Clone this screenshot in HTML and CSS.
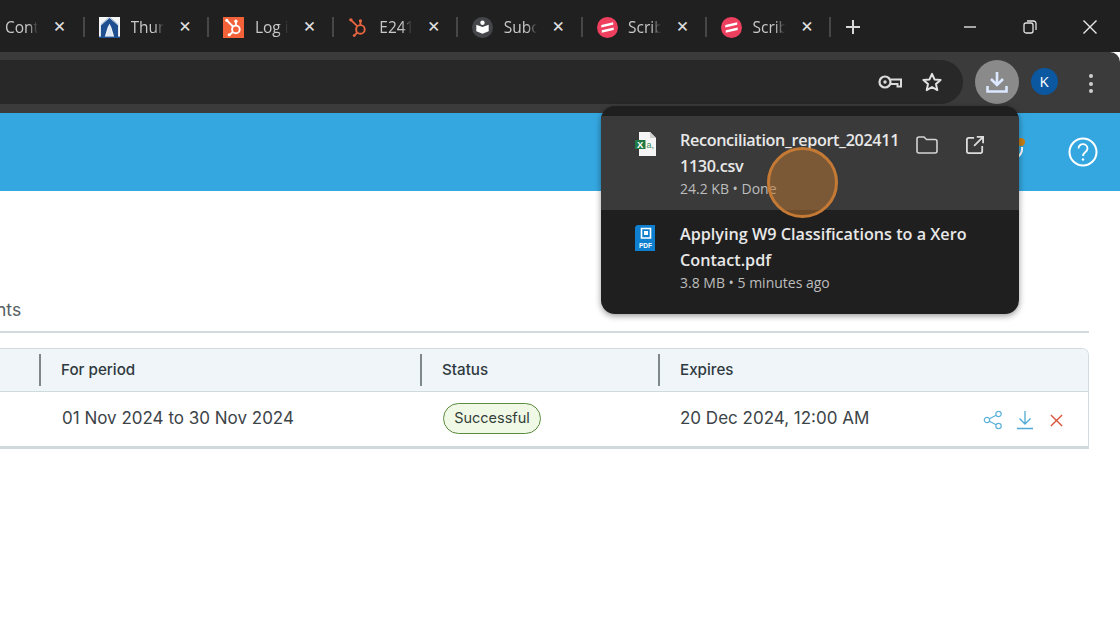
FILE: index.html
```html
<!DOCTYPE html>
<html lang="en">
<head>
<meta charset="utf-8">
<title>Downloads</title>
<link rel="stylesheet" href="styles.css">
</head>
<body>
<div class="tabstrip">
  <div class="tab tab-first"><span class="tab-label">Cont</span><span class="tab-close">✕</span></div>
  <div class="tab">
    <svg class="tab-icon" viewBox="0 0 22 22"><rect width="22" height="22" fill="#f4f6f8"/><path d="M11 1 20 9V21H16L13 11 11 7 9 11 6 21H2V9Z" fill="#1d4f91"/><path d="M11 8.500 14.500 20H7.500Z" fill="#dce8f4"/><path d="M2 8 11 0 20 8" fill="none" stroke="#9fb4c8" stroke-width="1"/><rect y="20.500" width="22" height="1.500" fill="#1d4f91"/></svg>
    <span class="tab-label">Thun</span><span class="tab-close">✕</span>
  </div>
  <div class="tab">
    <svg class="tab-icon" viewBox="0 0 22 22"><rect width="22" height="22" fill="#f4623a"/><g fill="none" stroke="#fff" stroke-width="2"><circle cx="13.500" cy="13" r="4"/><path d="M13.500 9V5M4.500 4l6 6M10 16l-3 2.500"/></g><circle cx="13.500" cy="4.500" r="1.800" fill="#fff"/><circle cx="4" cy="3.500" r="1.700" fill="#fff"/><circle cx="6.500" cy="18.500" r="1.600" fill="#fff"/></svg>
    <span class="tab-label">Log i</span><span class="tab-close">✕</span>
  </div>
  <div class="tab">
    <svg class="tab-icon" viewBox="0 0 22 22"><g fill="none" stroke="#e8663f" stroke-width="2"><circle cx="13" cy="13" r="4.500"/><path d="M13 8.500V4.500M3.500 3.500l6.200 6M9.500 16.500l-2.500 2.500"/></g><circle cx="13" cy="4" r="1.700" fill="#e8663f"/><circle cx="3" cy="3" r="1.800" fill="#e8663f"/><circle cx="6.500" cy="19.500" r="1.500" fill="#e8663f"/></svg>
    <span class="tab-label">E241</span><span class="tab-close">✕</span>
  </div>
  <div class="tab">
    <svg class="tab-icon" viewBox="0 0 22 22"><circle cx="11" cy="11" r="11" fill="#44464a"/><circle cx="11" cy="6" r="2.300" fill="#fff"/><path d="M4.500 8 11 10.500 17.500 8V15L11 17.500 4.500 15Z" fill="#fff"/></svg>
    <span class="tab-label">Subc</span><span class="tab-close">✕</span>
  </div>
  <div class="tab">
    <svg class="tab-icon" viewBox="0 0 22 22"><circle cx="11" cy="11" r="11" fill="#ef3f5f"/><path d="M4.500 8.500 17 5.500V8L4.500 11ZM5 14 17.500 11V13.500L5 16.500Z" fill="#fff"/></svg>
    <span class="tab-label">Scrib</span><span class="tab-close">✕</span>
  </div>
  <div class="tab">
    <svg class="tab-icon" viewBox="0 0 22 22"><circle cx="11" cy="11" r="11" fill="#ef3f5f"/><path d="M4.500 8.500 17 5.500V8L4.500 11ZM5 14 17.500 11V13.500L5 16.500Z" fill="#fff"/></svg>
    <span class="tab-label">Scrib</span><span class="tab-close">✕</span>
  </div>
  <svg class="new-tab" viewBox="0 0 14 14"><path d="M7 0V14M0 7H14" stroke="#d8d8d8" stroke-width="2"/></svg>
  <div class="window-controls">
    <svg class="win-btn" viewBox="0 0 14 14"><path d="M1 7H13" stroke="#e2e2e2" stroke-width="1.400"/></svg>
    <svg class="win-btn" viewBox="0 0 14 14"><rect x="1" y="3" width="9" height="10" rx="2" fill="none" stroke="#e2e2e2" stroke-width="1.300"/><path d="M4 1H10.500A2.500 2.500 0 0 1 13 3.500V10" fill="none" stroke="#e2e2e2" stroke-width="1.300"/></svg>
    <svg class="win-btn" viewBox="0 0 14 14"><path d="M0.500 0.500 13.500 13.500M13.500 0.500 0.500 13.500" stroke="#e8e8e8" stroke-width="1.400"/></svg>
  </div>
</div>

<div class="toolbar">
  <div class="omnibox">
    <svg class="omni-key" viewBox="0 0 24 16"><circle cx="7" cy="8" r="5.500" fill="none" stroke="#dcdcdc" stroke-width="2.200"/><circle cx="7" cy="8" r="1.700" fill="#dcdcdc"/><path d="M12.500 5.500H23V12.500H19.500V10H13" fill="none" stroke="#dcdcdc" stroke-width="2"/></svg>
    <svg class="omni-star" viewBox="0 0 20 20"><path d="M10 1.800 12.500 7.400 18.600 8 14 12.100 15.300 18.100 10 15 4.700 18.100 6 12.100 1.400 8 7.500 7.400Z" fill="none" stroke="#e2e2e2" stroke-width="2" stroke-linejoin="round"/></svg>
  </div>
  <div class="dl-button">
    <svg class="dl-icon" viewBox="0 0 22 22"><path d="M11 1V13.500M5 8 11 14 17 8M1.500 15V20.500H20.500V15" fill="none" stroke="#dbe8ff" stroke-width="2.600"/></svg>
  </div>
  <div class="avatar">K</div>
  <div class="kebab"><i></i><i></i><i></i></div>
</div>

<header class="app-bar">
  <svg class="bell-piece" viewBox="0 0 20 28"><circle cx="10" cy="7" r="4" fill="#c77f14"/><path d="M11 12C11.500 17 9 21 5 23" fill="none" stroke="#fff" stroke-width="2"/></svg>
  <svg class="help" viewBox="0 0 30 30"><circle cx="15" cy="15" r="13.500" fill="none" stroke="#fff" stroke-width="2"/><path d="M10.500 11.500C10.500 5.500 19.500 6 19.500 11.500 19.500 15 15 15 15 19" fill="none" stroke="#fff" stroke-width="1.800"/><circle cx="15" cy="22.500" r="1.200" fill="#fff"/></svg>
</header>

<main class="content">
  <div class="section-title">nts</div>
  <div class="data-table">
    <div class="table-head">
      <div class="cell cell-lead"></div>
      <div class="cell cell-period"><span>For period</span></div>
      <div class="cell cell-status"><span>Status</span></div>
      <div class="cell cell-expires"><span>Expires</span></div>
    </div>
    <div class="table-row">
      <div class="cell cell-lead"></div>
      <div class="cell cell-period">01 Nov 2024 to 30 Nov 2024</div>
      <div class="cell cell-status"><span class="badge">Successful</span></div>
      <div class="cell cell-expires">
        <span>20 Dec 2024, 12:00 AM</span>
        <div class="actions">
          <svg class="act" viewBox="0 0 20 20"><g fill="none" stroke="#5cb2d8" stroke-width="1.200"><circle cx="4" cy="10" r="2.700"/><circle cx="15.500" cy="4" r="2.700"/><circle cx="15.500" cy="16" r="2.700"/><path d="M6.400 8.700 13.100 5.300M6.400 11.300 13.100 14.700"/></g></svg>
          <svg class="act" viewBox="0 0 20 20"><path d="M10 1V14M4.500 8.500 10 14 15.500 8.500M2 18.500H18" fill="none" stroke="#4fa9d6" stroke-width="1.300"/></svg>
          <svg class="act act-x" viewBox="0 0 14 14"><path d="M1 1 13 13M13 1 1 13" stroke="#d9553b" stroke-width="1.500"/></svg>
        </div>
      </div>
    </div>
  </div>
</main>

<aside class="dl-popup">
  <div class="dl-item dl-item-hover">
    <svg class="file-icon" viewBox="0 0 22 24"><path d="M4 0H15L21 6V24H4Z" fill="#f5f5f5"/><path d="M15 0 21 6H15Z" fill="#cfcfcf"/><rect y="8" width="10.500" height="9" fill="#1f7a45"/><text class="xl-x" x="5.200" y="15.800">X</text><text class="xl-a" x="11.500" y="15.500">a,</text></svg>
    <div class="dl-text">
      <div class="dl-name dl-tight dl-clip">Reconciliation_report_202411</div>
      <div class="dl-name dl-tight">1130.csv</div>
      <div class="dl-sub">24.2 KB • Done</div>
    </div>
    <div class="dl-actions">
      <svg class="dl-act" viewBox="0 0 22 18"><path d="M1 3A2 2 0 0 1 3 1H8L10.500 3.500H19A2 2 0 0 1 21 5.500V15A2 2 0 0 1 19 17H3A2 2 0 0 1 1 15Z" fill="none" stroke="#d4d4d4" stroke-width="1.600"/></svg>
      <svg class="dl-act" viewBox="0 0 20 20"><path d="M9 2H3A2 2 0 0 0 1 4V17A2 2 0 0 0 3 19H16A2 2 0 0 0 18 17V11M12 1H19V8M19 1 9 11" fill="none" stroke="#dcdcdc" stroke-width="2"/></svg>
    </div>
  </div>
  <div class="dl-item">
    <svg class="file-icon" viewBox="0 0 22 26"><path d="M2 0H20V26H0V2Z" fill="#0f7fd0"/><path d="M6.500 3.500H15.500V13H6.500Z" fill="none" stroke="#fff" stroke-width="1.600"/><rect x="9" y="6" width="4" height="4" fill="#fff"/><text class="pdf-t" x="10.500" y="22.500">PDF</text></svg>
    <div class="dl-text">
      <div class="dl-name">Applying W9 Classifications to a Xero</div>
      <div class="dl-name">Contact.pdf</div>
      <div class="dl-sub">3.8 MB • 5 minutes ago</div>
    </div>
  </div>
</aside>
<div class="cursor-ring"></div>
</body>
</html>
```
FILE: styles.css
```css
* { box-sizing: border-box; }
html, body { margin: 0; padding: 0; }
body {
  width: 1120px;
  height: 626px;
  overflow: hidden;
  position: relative;
  background: #fff;
  font-family: Inter, "Liberation Sans", sans-serif;
}

/* Tab strip */
.tabstrip {
  height: 52px;
  background: #202020;
  display: flex;
  align-items: center;
  color: #c8c8c8;
  font-family: "Open Sans", "Noto Sans", sans-serif;
  padding-top: 2px;
}
.tab {
  width: 124.4px;
  height: 20px;
  flex: none;
  display: flex;
  align-items: center;
  padding-left: 14px;
  border-right: 2px solid #474747;
}
.tab-first { width: 85px; padding-left: 5px; }
.tab-icon { width: 21px; height: 21px; flex: none; margin-right: 10.500px; }
.tab-label {
  width: 33px;
  flex: none;
  font-size: 15.5px;
  line-height: 20px;
  white-space: nowrap;
  color: #c9c9c9;
  -webkit-mask-image: linear-gradient(to right, #000 70%, transparent 100%);
  mask-image: linear-gradient(to right, #000 70%, transparent 100%);
}
.tab-close {
  width: 14px;
  margin-left: 14.500px;
  flex: none;
  font-family: "DejaVu Sans", sans-serif;
  font-size: 15.500px;
  line-height: 14px;
  text-align: center;
  color: #dedede;
}
.new-tab { width: 14px; height: 14px; flex: none; margin-left: 14.500px; }
.window-controls { margin-left: auto; display: flex; gap: 46px; padding-right: 23px; }
.win-btn { width: 14px; height: 14px; display: block; }

/* Toolbar */
.toolbar {
  height: 61px;
  background: #3b3b3b;
  border-top-right-radius: 10px;
  display: flex;
  align-items: flex-start;
  padding-top: 8px;
}
.omnibox {
  width: 963px;
  height: 44px;
  flex: none;
  background: #282828;
  border-radius: 0 22px 22px 0;
  display: flex;
  align-items: center;
  justify-content: flex-end;
  padding-right: 21px;
}
.omni-key { width: 24px; height: 16px; margin-right: 20px; }
.omni-star { width: 20px; height: 20px; }
.dl-button {
  width: 44px;
  height: 44px;
  flex: none;
  margin-left: 12px;
  border-radius: 50%;
  background: #8a8a8a;
  display: flex;
  align-items: center;
  justify-content: center;
}
.dl-icon { width: 22px; height: 22px; }
.avatar {
  width: 27px;
  height: 27px;
  flex: none;
  margin: 8px 0 0 11.500px;
  border-radius: 50%;
  background: #0b57a0;
  color: #fff;
  font: 15px/27px "Open Sans", sans-serif;
  text-align: center;
}
.kebab {
  flex: none;
  margin: 14px 0 0 25.500px;
  width: 16px;
  display: flex;
  flex-direction: column;
  align-items: center;
  gap: 3.500px;
}
.kebab i { width: 4px; height: 4px; border-radius: 50%; background: #cfcfcf; display: block; }

/* App bar */
.app-bar {
  height: 78px;
  background: #35a7e0;
  display: flex;
  align-items: center;
  justify-content: flex-end;
  padding-right: 22px;
}
.bell-piece { width: 20px; height: 28px; margin-right: 37px; margin-top: -6px; }
.help { width: 30px; height: 30px; flex: none; }

/* Content */
.content { padding: 107px 31px 0 0; }
.section-title {
  font-size: 17.500px;
  line-height: 24px;
  color: #555e63;
  padding-bottom: 9px;
  border-bottom: 2px solid #d3dbde;
  margin-bottom: 15px;
  text-indent: -4px;
}
.data-table {
  border: 1px solid #d2dcdf;
  border-left: 0;
  border-bottom: 3px solid #d2d9dc;
  border-top-right-radius: 7px;
  overflow: hidden;
}
.table-head {
  height: 43px;
  background: #eff5f8;
  border-bottom: 1px solid #cfdade;
  display: flex;
  align-items: center;
  font-size: 15.200px;
  font-weight: 500;
  color: #2f3a40;
  padding-bottom: 1px;
}
.table-row {
  height: 54px;
  display: flex;
  align-items: center;
  font-size: 17px;
  color: #3c4448;
  padding-bottom: 2px;
}
.cell { padding-left: 21px; flex: none; display: flex; align-items: center; }
.cell-lead { width: 40px; padding: 0; }
.cell-period { width: 381px; }
.cell-status { width: 238px; }
.cell-expires { flex: 1; min-width: 0; }
.table-row .cell-period, .table-row .cell-status { padding-left: 22px; }
.table-head .cell { height: 32px; }
.table-head .cell-lead { width: 39px; }
.table-head .cell-period, .table-head .cell-status, .table-head .cell-expires { border-left: 2px solid #7d878c; padding-left: 20px; }
.badge {
  height: 31px;
  width: 98px;
  border: 1.500px solid #5c8a3e;
  border-radius: 16px;
  background: #eff9e5;
  font-size: 14.500px;
  line-height: 28px;
  text-align: center;
  color: #34403a;
}
.actions {
  margin-left: auto;
  display: flex;
  align-items: center;
  gap: 12px;
  padding-right: 25px;
  margin-top: 4px;
}
.act { width: 20px; height: 20px; display: block; }
.act-x { width: 13px; height: 13px; margin-left: 3px; }

/* Download popup */
.dl-popup {
  position: absolute;
  left: 601px;
  top: 106px;
  width: 418px;
  height: 208px;
  padding: 10px 0;
  border-radius: 14px;
  background: #1f1f1f;
  box-shadow: 0 2px 6px rgba(0, 0, 0, 0.4);
  font-family: "Open Sans", "Noto Sans", sans-serif;
  color: #e8e8e8;
  overflow: hidden;
}
.dl-item { height: 94px; display: flex; padding: 11px 0 0 34px; position: relative; }
.dl-item-hover { background: #3a3a3a; }
.file-icon { width: 22px; height: 26px; flex: none; margin: 4px 23px 0 0; }
.xl-x { font: 700 9.500px "Liberation Sans", sans-serif; fill: #fff; text-anchor: middle; }
.xl-a { font: 9px "Liberation Sans", sans-serif; fill: #3b8f5e; }
.pdf-t { font: 700 6.500px "Liberation Sans", sans-serif; fill: #fff; text-anchor: middle; }
.dl-text { flex: none; min-width: 0; }
.dl-name { font-size: 16.200px; font-weight: 600; line-height: 26px; white-space: nowrap; }
.dl-tight { letter-spacing: -0.35px; }
.dl-clip { width: 219px; overflow: hidden; }
.dl-sub { font-size: 14px; line-height: 20px; color: #bdbdbd; }
.dl-actions { display: flex; align-items: center; gap: 26px; height: 18px; margin: 9px 0 0 17px; }
.dl-act { width: 22px; height: 18px; display: block; }

/* Click highlight */
.cursor-ring {
  position: absolute;
  left: 767px;
  top: 147px;
  width: 71px;
  height: 71px;
  border-radius: 50%;
  background: rgba(190, 120, 50, 0.5);
  border: 3px solid #c47a35;
}
```
